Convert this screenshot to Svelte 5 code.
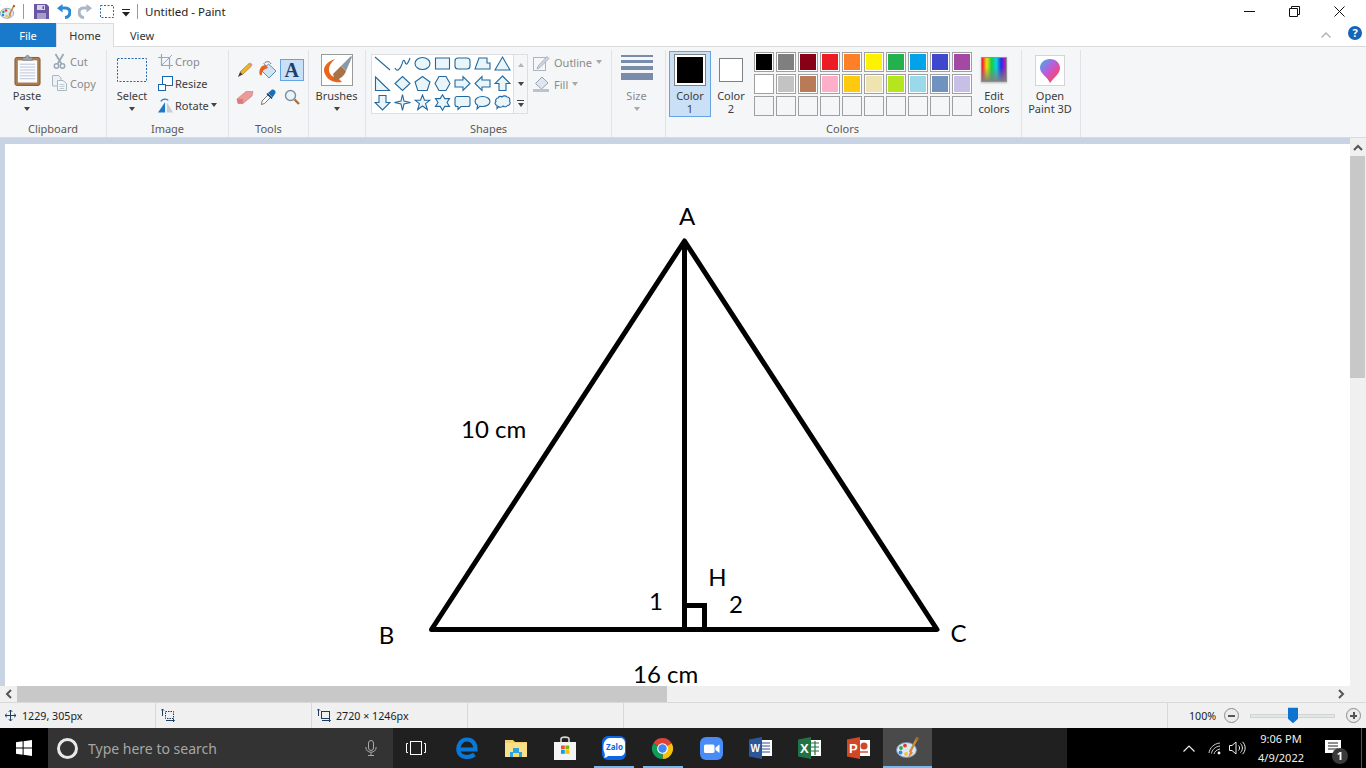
<script>
  const swatches = ['#000000','#7f7f7f','#880015','#ed1c24','#ff7f27','#fff200','#22b14c','#00a2e8','#3f48cc','#a349a4','#ffffff','#c3c3c3','#b97a57','#ffaec9','#ffc90e','#efe4b0','#b5e61d','#99d9ea','#7092be','#c8bfe7',null,null,null,null,null,null,null,null,null,null];
  const shapes = [
    'M1 2L16 15','M1 13C3 17 6 15 8 9C9 5 10 4 11 7C12 11 14 9 16 3','M1 8.5a7.5 6 0 1 0 15 0a7.5 6 0 1 0-15 0Z','M1.5 3h14v11h-14Z','M4 3h9a3 3 0 0 1 3 3v5a3 3 0 0 1-3 3h-9a3 3 0 0 1-3-3v-5a3 3 0 0 1 3-3Z','M1 14L5 3h8v5h3v6Z','M8.5 2L16 15H1Z',
    'M1.5 2L15.5 15.5H1.5Z','M8.5 1.5L16 8.5L8.5 15.5L1 8.5Z','M8.5 1.5L16 7L13.2 15.5H3.8L1 7Z','M5 1.5H12L16 8.5L12 15.5H5L1 8.5Z','M1 5H9V1.5L16 8.5L9 15.5V12H1Z','M16 5H8V1.5L1 8.5L8 15.5V12H16Z','M8.5 1L16 8.5H12V15.5H5V8.5H1Z',
    'M5 1.5H12V8.5H16L8.5 16L1 8.5H5Z','M8.5 .5L10 7L16.5 8.5L10 10L8.5 16.5L7 10L.5 8.5L7 7Z','M8.5 1L10.5 6.2H16L11.6 9.6L13.3 15.5L8.5 12L3.7 15.5L5.4 9.6L1 6.2H6.5Z','M8.5 .8L10.8 4.6H15.5L13 8.5L15.5 12.4H10.8L8.5 16.2L6.2 12.4H1.5L4 8.5L1.5 4.6H6.2Z','M3 2.5H14a2 2 0 0 1 2 2v6a2 2 0 0 1-2 2H7L4 15.5V12.5H3a2 2 0 0 1-2-2v-6a2 2 0 0 1 2-2Z','M8.5 2.5C13 2.5 16 4.8 16 7.5S13 12.5 8.5 12.5C7.5 12.5 6.8 12.4 6 12.2L3 15L3.6 11.2C2 10.2 1 9 1 7.5C1 4.8 4 2.5 8.5 2.5Z','M4 4C5 2 7 2 8 3C9 1.5 12 1.5 13 3C15 3 16.5 5 15.5 7C17 9 15.5 11.5 13.5 11.5C12.5 13 10 13 9 12C8 13.5 5.5 13.5 4.5 12.5L3 14.5V11.5C1 11 .5 8.5 2 7.5C1 6 2.5 4 4 4Z'
  ];
  const taskItems = ['edge','folder','store','zalo','chrome','zoom','word','excel','ppt','paint'];
</script>

{#snippet palette(size)}
  <svg width={size} height={size} viewBox="0 0 24 24" class="block">
    <ellipse cx="10.5" cy="14" rx="10" ry="7.5" fill="#dbe8f3" stroke="#6d8fae" />
    <circle cx="5" cy="12" r="1.9" fill="#3fa34d" />
    <circle cx="9" cy="9.6" r="1.9" fill="#e53935" />
    <circle cx="4.5" cy="16.5" r="1.9" fill="#2e86de" />
    <circle cx="10" cy="18" r="1.9" fill="#f4c430" />
    <path d="M21.5 1.5L14 16" stroke="#c98a3c" stroke-width="2.4" />
    <path d="M14.5 14L12 22L17 17Z" fill="#e8872c" />
    <path d="M20 1L23 2.5L21.8 5L19 3.6Z" fill="#a3672e" />
  </svg>
{/snippet}

{#snippet caret(kind)}
  <span class="caret {kind}"></span>
{/snippet}

<div class="window">
  <header class="titlebar">
    <span class="app-icon">{@render palette(16)}</span>
    <span class="qa-sep first"></span>
    <svg class="qa save" width="15" height="15" viewBox="0 0 15 15"><path d="M0 0H12.5L15 2.5V15H0Z" fill="#6a56a5" /><path d="M3 1H11V6H3Z" fill="#d6d0e6" /><path d="M3 9H12V15H3Z" fill="#a79cc8" /><path d="M8.5 2H10V5H8.5Z" fill="#6a56a5" /></svg>
    <svg class="qa undo" width="14" height="15" viewBox="0 0 14 15"><path d="M2 4H8.5C15 4 14 13 8 13.5" fill="none" stroke="#2b8ad6" stroke-width="3.2" /><path d="M5.5 0V8.5L0 4.2Z" fill="#2b8ad6" /></svg>
    <svg class="qa redo" width="14" height="15" viewBox="0 0 14 15"><path d="M12 4H5.5C-1 4 0 13 6 13.5" fill="none" stroke="#a9b7c6" stroke-width="3.2" /><path d="M8.5 0V8.5L14 4.2Z" fill="#a9b7c6" /></svg>
    <svg class="qa sel" width="14" height="13" viewBox="0 0 14 13"><rect x=".5" y=".5" width="13" height="12" fill="none" stroke="#2367ad" stroke-dasharray="2 1.5" /></svg>
    <svg class="qa more" width="8" height="8" viewBox="0 0 8 8"><path d="M0 0H8V1H0Z M0 3H8L4 7.5Z" fill="#222" /></svg>
    <span class="qa-sep second"></span>
    <span class="title">Untitled - Paint</span>
    <div class="winbtns">
      <span class="winbtn"><svg width="11" height="11" viewBox="0 0 11 11"><path d="M0 5.5H11" stroke="#111" /></svg></span>
      <span class="winbtn"><svg width="11" height="11" viewBox="0 0 11 11"><path d="M.5 2.5H8.5V10.5H.5Z M2.5 2.5V.5H10.5V8.5H8.5" fill="none" stroke="#111" /></svg></span>
      <span class="winbtn"><svg width="11" height="11" viewBox="0 0 11 11"><path d="M.5 .5L10.5 10.5M10.5 .5L.5 10.5" stroke="#111" /></svg></span>
    </div>
  </header>

  <nav class="tabs">
    <span class="tab file">File</span>
    <span class="tab home">Home</span>
    <span class="tab view">View</span>
    <svg class="collapse" width="10" height="6" viewBox="0 0 10 6"><path d="M.5 5.5L5 1L9.5 5.5" fill="none" stroke="#aab0b8" stroke-width="1.3" /></svg>
    <span class="help">?</span>
  </nav>

  <section class="ribbon">
    <div class="group g-clip">
      <div class="content">
        <div class="big paste">
          <span class="big-icon">
            <svg width="27" height="32" viewBox="0 0 28 32"><rect x="1" y="3" width="26" height="29" rx="2" fill="#a97c50" stroke="#80592f" /><rect x="4" y="6" width="20" height="23" fill="#fafbfd" /><path d="M6 10H22M6 13H22M6 16H22M6 19H22M6 22H22M6 25H22" stroke="#b9c6d8" /><path d="M9 6V3H12C12 0 16 0 16 3H19V6Z" fill="#9da3aa" stroke="#6f757b" stroke-width=".6" /></svg>
          </span>
          <span class="big-label">Paste</span>
          {@render caret('dark')}
        </div>
        <div class="smalls">
          <div class="small off">
            <svg width="15" height="16" viewBox="0 0 14 16"><path d="M3 1L9 11M11 1L5 11" stroke="#9aa8b8" stroke-width="1.8" /><circle cx="4" cy="13" r="2.2" fill="none" stroke="#9aa8b8" stroke-width="1.5" /><circle cx="10" cy="13" r="2.2" fill="none" stroke="#9aa8b8" stroke-width="1.5" /></svg>
            <span>Cut</span>
          </div>
          <div class="small off">
            <svg width="15" height="16" viewBox="0 0 15 16"><path d="M.5 .5H6.5L9 3V11H.5Z" fill="#eef2f6" stroke="#a9b6c4" /><path d="M5.5 5.5H11L14.5 8.5V15.5H5.5Z" fill="#f6f8fa" stroke="#a9b6c4" /><path d="M7.5 9.5H12.5M7.5 11.5H12.5M7.5 13.5H12.5" stroke="#c1cbd6" /></svg>
            <span>Copy</span>
          </div>
        </div>
      </div>
      <div class="glabel">Clipboard</div>
    </div>

    <div class="group g-image">
      <div class="content">
        <div class="big select">
          <span class="big-icon">
            <svg width="30" height="24" viewBox="0 0 30 24"><rect x=".5" y=".5" width="29" height="23" fill="none" stroke="#2367ad" stroke-dasharray="2 1.5" /></svg>
          </span>
          <span class="big-label">Select</span>
          {@render caret('dark')}
        </div>
        <div class="smalls">
          <div class="small off">
            <svg width="15" height="15" viewBox="0 0 15 15"><path d="M3.5 0V11.5H15M0 3.5H11.5V15" fill="none" stroke="#96a6c0" stroke-width="1.2" /><path d="M3.5 11.5L14 1" stroke="#96a6c0" /></svg>
            <span>Crop</span>
          </div>
          <div class="small">
            <svg width="15" height="15" viewBox="0 0 15 15"><rect x="4.5" y=".5" width="10" height="9" fill="#fff" stroke="#1a66ad" /><rect x=".5" y="8.5" width="7" height="6" fill="#fff" stroke="#1a66ad" /></svg>
            <span>Resize</span>
          </div>
          <div class="small">
            <svg width="15" height="15" viewBox="0 0 16 15"><path d="M7.5 4V15H0Z" fill="#1f78c8" /><path d="M9.5 4V15H16Z" fill="#c9ccd0" /><path d="M3 3C5 0 9 0 11 2" fill="none" stroke="#1f78c8" stroke-width="1.4" /></svg>
            <span>Rotate</span>
            {@render caret('dark inline')}
          </div>
        </div>
      </div>
      <div class="glabel">Image</div>
    </div>

    <div class="group g-tools">
      <div class="content tools-grid">
        <span class="tool"><svg width="16" height="16" viewBox="0 0 16 16"><path d="M3 10L12 1.5L14.5 4L5.5 12.5Z" fill="#f0b429" stroke="#8d6a1a" stroke-width=".6" /><path d="M12 1.5L13.5 .5L15.5 2.5L14.5 4Z" fill="#e58f8f" /><path d="M3 10L1 15L5.5 12.5Z" fill="#3a3a3a" /></svg></span>
        <span class="tool"><svg width="18" height="19" viewBox="0 0 18 19"><path d="M9.5 3L17 10L10 17L3 10Z" fill="#cfe4f5" stroke="#5a8fbe" /><path d="M7 5L5 2.5C7 0 11 0 12 3" fill="none" stroke="#6b7c8c" /><path d="M7 4C2 4 0 8 .5 13C1 15 3 15 3 12.5C3 10 5 8 9 7Z" fill="#e4641f" /></svg></span>
        <span class="tool active"><span class="tool-a">A</span></span>
        <span class="tool"><svg width="18" height="15" viewBox="0 0 18 15"><path d="M1 9L10 1.5H17L16 6L7 13.5H2Z" fill="#ec9b9b" stroke="#c77474" stroke-width=".6" /><path d="M1 9H7L7 13.5H2Z" fill="#dc7b7b" /></svg></span>
        <span class="tool"><svg width="16" height="17" viewBox="0 0 16 17"><path d="M1.5 15.5L2 12L8 6L10.5 8.5L4.5 14.5Z" fill="#fff" stroke="#555" stroke-width=".8" /><path d="M8 4L12 .5C14 0 16 2 15.5 4L12.5 8.5Z" fill="#1c6eb4" /><path d="M7 4.5L12 9.5" stroke="#123f66" stroke-width="1.6" /></svg></span>
        <span class="tool"><svg width="16" height="16" viewBox="0 0 16 16"><circle cx="6.5" cy="6.5" r="5" fill="#eaf3fa" stroke="#7e8d9c" stroke-width="1.4" /><path d="M10.5 10.5L15 15" stroke="#a7743f" stroke-width="2.4" /></svg></span>
      </div>
      <div class="glabel">Tools</div>
    </div>

    <div class="group g-brush">
      <div class="content">
        <div class="big brush">
          <span class="big-icon">
            <svg width="32" height="32" viewBox="0 0 32 32"><rect x=".5" y=".5" width="31" height="31" fill="#fff" stroke="#9a9a9a" /><path d="M14 5C5 8 1 14 4 20C7 27 14 29 21 28L17 24C12 24 8 20 8 16C8 11 11 8 14 5Z" fill="#e9651c" /><path d="M12 20L20 12L25 17C23 23 17 27 10 26C13 25 13 22 12 20Z" fill="#a97146" /><path d="M20 12L30 2L31 3L25 17Z" fill="#8b98a8" /></svg>
          </span>
          <span class="big-label">Brushes</span>
          {@render caret('dark')}
        </div>
      </div>
      <div class="glabel"></div>
    </div>

    <div class="group g-shapes">
      <div class="content shapes-row">
        <div class="gallery">
          <div class="shape-grid">
            {#each shapes as d}
              <span class="shape"><svg width="17" height="17" viewBox="0 0 17 17"><path {d} fill={d === shapes[0] || d === shapes[1] ? 'none' : '#eaf5fa'} stroke="#21699f" stroke-width="1.1" /></svg></span>
            {/each}
          </div>
          <div class="scroller">
            <span class="sc"><span class="tri up"></span></span>
            <span class="sc"><span class="tri down"></span></span>
            <span class="sc"><span class="bar"></span><span class="tri down"></span></span>
          </div>
        </div>
        <div class="smalls narrow">
          <div class="small off">
            <svg width="17" height="17" viewBox="0 0 17 17"><rect x=".5" y="3.5" width="12" height="13" fill="#f4f6f8" stroke="#a9b6c4" /><path d="M5 12L14 2.5L16 4.5L7 13.5L4 15Z" fill="#cdd5de" stroke="#95a3b2" stroke-width=".7" /></svg>
            <span>Outline</span>{@render caret('light inline')}
          </div>
          <div class="small off">
            <svg width="17" height="17" viewBox="0 0 17 17"><path d="M9 1L15 7L8.5 13L2.5 7.5Z" fill="#dfe6ee" stroke="#95a3b2" /><path d="M0 13H16V16H0Z" fill="#b9c4d0" /></svg>
            <span>Fill</span>{@render caret('light inline')}
          </div>
        </div>
      </div>
      <div class="glabel">Shapes</div>
    </div>

    <div class="group g-size">
      <div class="content">
        <div class="big size">
          <span class="big-icon size-lines"><i class="l1"></i><i class="l2"></i><i class="l3"></i><i class="l4"></i></span>
          <span class="big-label off">Size</span>
          {@render caret('light')}
        </div>
      </div>
      <div class="glabel"></div>
    </div>

    <div class="group g-colors">
      <div class="content colors-row">
        <div class="color-btn active">
          <span class="swatch-big"><span></span></span>
          <span class="two">Color<br />1</span>
        </div>
        <div class="color-btn second">
          <span class="swatch-2"></span>
          <span class="two">Color<br />2</span>
        </div>
        <div class="swatches">
          {#each swatches as c}
            <span class="cell" class:empty={!c}><span style:background={c}></span></span>
          {/each}
        </div>
        <div class="big edit">
          <span class="rainbow"></span>
          <span class="two">Edit<br />colors</span>
        </div>
      </div>
      <div class="glabel">Colors</div>
    </div>

    <div class="group g-3d">
      <div class="content">
        <div class="big p3d">
          <span class="box3d">
            <svg width="22" height="26" viewBox="0 0 22 26">
              <defs><linearGradient id="drop" x1="0" y1="0" x2="1" y2="1"><stop offset="0" stop-color="#33b5f0" /><stop offset=".45" stop-color="#c05ad8" /><stop offset=".75" stop-color="#f0487a" /><stop offset="1" stop-color="#f59a2c" /></linearGradient></defs>
              <path d="M11 1C17 1 21 5 21 10C21 16 15 19 11 25C9 19 1 16 1 10C1 5 5 1 11 1Z" fill="url(#drop)" />
            </svg>
          </span>
          <span class="two">Open<br />Paint 3D</span>
        </div>
      </div>
      <div class="glabel"></div>
    </div>
  </section>

  <main class="workspace">
    <div class="viewport">
      <svg class="canvas" width="1345" height="542" viewBox="5 144 1345 542">
        <g fill="none" stroke="#000" stroke-width="5">
          <path d="M431.5 629.5L684.5 241L937 629.5Z" stroke-linejoin="round" />
          <path d="M684.5 241V630" />
          <path d="M686 605.5H704.5V630" />
        </g>
        <g class="math">
          <text x="687" y="225" text-anchor="middle">A</text>
          <text x="461" y="438">10 cm</text>
          <text x="717.5" y="586" text-anchor="middle">H</text>
          <text x="656" y="610" text-anchor="middle">1</text>
          <text x="736" y="613" text-anchor="middle">2</text>
          <text x="386.5" y="644" text-anchor="middle">B</text>
          <text x="958.5" y="642" text-anchor="middle">C</text>
          <text x="633" y="683">16 cm</text>
        </g>
      </svg>
    </div>
    <div class="vscroll">
      <span class="vbtn"><svg width="10" height="7" viewBox="0 0 10 7"><path d="M1 6L5 2L9 6" fill="none" stroke="#555" stroke-width="2" /></svg></span>
      <span class="vthumb"></span>
    </div>
  </main>

  <div class="hscroll">
    <span class="hbtn"><svg width="7" height="10" viewBox="0 0 7 10"><path d="M6 1L2 5L6 9" fill="none" stroke="#555" stroke-width="2" /></svg></span>
    <span class="hthumb"></span>
    <span class="hbtn right"><svg width="7" height="10" viewBox="0 0 7 10"><path d="M1 1L5 5L1 9" fill="none" stroke="#555" stroke-width="2" /></svg></span>
  </div>

  <footer class="status">
    <div class="st s1">
      <svg width="11" height="11" viewBox="0 0 11 11"><path d="M5.5 0V11M0 5.5H11M3.8 1.8L5.5 0L7.2 1.8M3.8 9.2L5.5 11L7.2 9.2M1.8 3.8L0 5.5L1.8 7.2M9.2 3.8L11 5.5L9.2 7.2" fill="none" stroke="#1c3d63" /></svg>
      <span>1229, 305px</span>
    </div>
    <div class="st s2">
      <svg width="14" height="13" viewBox="0 0 14 13"><rect x="4.5" y="2.5" width="8" height="7" fill="none" stroke="#1c3d63" stroke-dasharray="1.5 1" /><path d="M1.5 0V7M0 1.5L1.5 0L3 1.5M5 11.5H13M12 10L13.5 11.5L12 13" fill="none" stroke="#1c3d63" /></svg>
    </div>
    <div class="st s3">
      <svg width="14" height="13" viewBox="0 0 14 13"><rect x="4.5" y="2.5" width="8" height="7" fill="none" stroke="#1c3d63" /><path d="M1.5 0V7M0 1.5L1.5 0L3 1.5M5 11.5H13M12 10L13.5 11.5L12 13" fill="none" stroke="#1c3d63" /></svg>
      <span>2720 × 1246px</span>
    </div>
    <div class="st s4"></div>
    <div class="st s5"></div>
    <div class="zoombar">
      <span class="pct">100%</span>
      <span class="zbtn"><i></i></span>
      <span class="slider"><svg class="thumb" width="10" height="17" viewBox="0 0 11 17"><path d="M0 0H11V12L5.5 17L0 12Z" fill="#0d73d1" /></svg></span>
      <span class="zbtn plus"><i></i><b></b></span>
    </div>
  </footer>

  <div class="taskbar">
    <div class="start"><svg width="16" height="16" viewBox="0 0 16 16"><path d="M0 2.3L6.6 1.3V7.5H0Z M7.6 1.2L16 0V7.5H7.6Z M0 8.5H6.6V14.7L0 13.7Z M7.6 8.5H16V16L7.6 14.8Z" fill="#fff" /></svg></div>
    <div class="search">
      <span class="ring"></span>
      <span class="placeholder">Type here to search</span>
      <svg class="mic" width="12" height="16" viewBox="0 0 12 16"><rect x="3.5" y=".5" width="5" height="10" rx="2.5" fill="none" stroke="#a8a8a8" /><path d="M.8 7C.8 14 11.2 14 11.2 7M6 12.5V15.5M3 15.5H9" fill="none" stroke="#a8a8a8" /></svg>
    </div>
    <div class="tv"><svg width="20" height="14" viewBox="0 0 20 14"><rect x="4.5" y=".5" width="11" height="13" fill="none" stroke="#fff" /><path d="M2 2.5H.5V11.5H2M18 2.5H19.5V11.5H18" fill="none" stroke="#fff" /></svg></div>
    {#each taskItems as item}
      <div class="ti {item}">
        {#if item === 'edge'}
          <svg width="22" height="22" viewBox="0 0 22 22"><path d="M3 12.5H19.5C19.5 6 16 2.5 11 2.5C5 2.5 2.3 8 2.3 12C2.3 17 6 20 11 20C14 20 16.5 19 18.5 17.5" fill="none" stroke="#0a78d7" stroke-width="4.2" /></svg>
        {:else if item === 'folder'}
          <svg width="22" height="20" viewBox="0 0 22 20"><path d="M0 2H8L10 4H22V19H0Z" fill="#f3d26c" /><path d="M0 5H22V19H0Z" fill="#fbe08a" /><path d="M5 14H8V10H14V14H17V19H5Z" fill="#2ea4de" /><path d="M8 15H14V19H8Z" fill="#ffd76a" /></svg>
        {:else if item === 'store'}
          <svg width="24" height="24" viewBox="0 0 24 24"><path d="M8 7V3C8 0.5 16 .5 16 3V7" fill="none" stroke="#d5d5d5" stroke-width="1.6" /><path d="M1 6H23V24H1Z" fill="#f4f4f4" /><rect x="8" y="9.5" width="3.8" height="3.8" fill="#f25022" /><rect x="12.4" y="9.5" width="3.8" height="3.8" fill="#7fba00" /><rect x="8" y="14" width="3.8" height="3.8" fill="#00a4ef" /><rect x="12.4" y="14" width="3.8" height="3.8" fill="#ffb900" /></svg>
        {:else if item === 'zalo'}
          <svg width="24" height="24" viewBox="0 0 24 24"><rect width="24" height="24" rx="6" fill="#0a68e8" /><path d="M8 2H18C21 2 23 4 23 7V15C23 18 21 20 18 20H6C5 21 4 21.5 2 22C3 20 3 19 2.5 17C1 14 1 7 3 5C4 3 6 2 8 2Z" fill="#fff" /><text x="12.5" y="14" class="zalo-t" text-anchor="middle">Zalo</text></svg>
        {:else if item === 'chrome'}
          <svg width="23" height="23" viewBox="0 0 24 24"><path d="M12 12L2.47 6.5A11 11 0 0 1 21.53 6.5Z" fill="#db4437" /><path d="M12 12L21.53 6.5A11 11 0 0 1 12 23Z" fill="#f4c20d" /><path d="M12 12L12 23A11 11 0 0 1 2.47 6.5Z" fill="#0f9d58" /><circle cx="12" cy="12" r="5.6" fill="#fff" /><circle cx="12" cy="12" r="4.4" fill="#4285f4" /></svg>
        {:else if item === 'zoom'}
          <svg width="23" height="23" viewBox="0 0 23 23"><rect width="23" height="23" rx="6" fill="#4a8cf7" /><rect x="4" y="7.5" width="10.5" height="8.5" rx="1.6" fill="#fff" /><path d="M15.5 10.5L19.5 7.5V16L15.5 13Z" fill="#fff" /></svg>
        {:else if item === 'word'}
          <svg width="23" height="22" viewBox="0 0 23 22"><path d="M11 3H23V19H11Z" fill="#fff" /><path d="M13 6H21M13 9H21M13 12H21M13 15H21" stroke="#2b579a" stroke-width="1.2" /><path d="M0 2.5L13 0V22L0 19.5Z" fill="#2b579a" /><text x="6.3" y="15" class="office-t" text-anchor="middle">W</text></svg>
        {:else if item === 'excel'}
          <svg width="23" height="22" viewBox="0 0 23 22"><path d="M11 3H23V19H11Z" fill="#fff" /><path d="M13 6H21M13 10H21M13 14H21M17 4V18" stroke="#217346" stroke-width="1.2" /><path d="M0 2.5L13 0V22L0 19.5Z" fill="#217346" /><text x="6.3" y="15.5" class="office-t big-t" text-anchor="middle">X</text></svg>
        {:else if item === 'ppt'}
          <svg width="23" height="22" viewBox="0 0 23 22"><path d="M11 3H23V19H11Z" fill="#fff" /><circle cx="17" cy="9" r="3.5" fill="#d24726" /><path d="M13 15H21" stroke="#d24726" stroke-width="1.4" /><path d="M0 2.5L13 0V22L0 19.5Z" fill="#d24726" /><text x="6.3" y="15.5" class="office-t big-t" text-anchor="middle">P</text></svg>
        {:else}
          {@render palette(24)}
        {/if}
      </div>
    {/each}
    <div class="task-gap"></div>
    <div class="tray">
      <svg class="t-chev" width="12" height="7" viewBox="0 0 12 7"><path d="M.5 6.5L6 1L11.5 6.5" fill="none" stroke="#eee" stroke-width="1.2" /></svg>
      <svg class="t-wifi" width="14" height="13" viewBox="0 0 14 13"><path d="M1 11C1.5 6 6 1.5 12 1M3.5 11.5C4 8 7 4.5 12 4M6 12C6.5 10 8.5 7.5 12 7" fill="none" stroke="#cfcfcf" /><circle cx="11" cy="11" r="1.4" fill="#fff" /></svg>
      <svg class="t-vol" width="17" height="14" viewBox="0 0 17 14"><path d="M.5 4.5H3L7 1V13L3 9.5H.5Z" fill="none" stroke="#eee" /><path d="M9.5 4.5C11 6 11 8 9.5 9.5M11.5 2.5C14 5 14 9 11.5 11.5M13.5 .8C17 4 17 10 13.5 13.2" fill="none" stroke="#eee" /></svg>
      <div class="clock"><span>9:06 PM</span><span>4/9/2022</span></div>
      <span class="notif">
        <svg width="16" height="13" viewBox="0 0 16 13"><path d="M0 0H16V13H0Z" fill="#fff" /><path d="M3 3H13M3 6H13M3 9H13" stroke="#222" /></svg>
        <span class="badge">1</span>
      </span>
      <span class="show-desktop"></span>
    </div>
  </div>
</div>

<style>
  :global(body) { margin: 0; overflow: hidden; background: #fff; }
  .block { display: block; }
  .window {
    width: 1366px; height: 768px; display: flex; flex-direction: column; overflow: hidden;
    font-family: "Noto Sans", "Open Sans", sans-serif; font-size: 11px; color: #3c3c3c;
  }
  .titlebar { height: 23px; flex: none; display: flex; align-items: center; background: #fff; }
  .qa-sep { width: 1px; height: 15px; background: #9a9a9a; }
  .qa-sep.first { margin-left: 7px; }
  .qa-sep.second { margin-left: 7px; }
  .qa { flex: none; }
  .save { margin-left: 10px; }
  .undo { margin-left: 8px; }
  .redo { margin-left: 7px; }
  .sel { margin-left: 8px; }
  .more { margin-left: 8px; margin-top: 3px; }
  .title { margin-left: 7px; font-size: 11.5px; color: #222; }
  .winbtns { margin-left: auto; display: flex; padding-right: 4px; }
  .winbtn { width: 45px; height: 20px; display: flex; align-items: center; justify-content: center; }
  .winbtn svg { display: block; }

  .tabs { height: 24px; flex: none; display: flex; align-items: stretch; background: #fff; position: relative; box-shadow: inset 0 -1px 0 #dadbdc; }
  .tab { display: flex; align-items: center; justify-content: center; font-size: 11px; color: #333; box-sizing: border-box; }
  .tab.file { width: 56px; background: #1979ca; color: #fff; }
  .tab.home { width: 58px; background: #f5f6f7; border: 1px solid #dadbdc; border-bottom: 0; }
  .tab.view { width: 56px; }
  .collapse { margin: 9px 0 0 auto; }
  .help { width: 14px; height: 14px; margin: 3px 4px 0 17px; border-radius: 50%; background: #1564b8; color: #fff; font-size: 11px; font-weight: 700; line-height: 14px; text-align: center; }

  .ribbon { height: 91px; flex: none; display: flex; background: #f5f6f7; box-sizing: border-box; padding-top: 3px; border-bottom: 1px solid #dadbdc; }
  .group { box-sizing: border-box; height: 87px; border-right: 1px solid #e1e3e6; display: flex; flex-direction: column; flex: none; }
  .content { flex: 1; display: flex; min-height: 0; }
  .glabel { height: 14px; line-height: 14px; margin-bottom: 1px; text-align: center; color: #595959; font-size: 11px; }
  .g-colors .glabel { padding-right: 2px; }
  .g-clip { width: 107px; }
  .g-image { width: 122px; }
  .g-tools { width: 80px; }
  .g-brush { width: 57px; }
  .g-shapes { width: 246px; }
  .g-size { width: 54px; }
  .g-colors { width: 356px; }
  .g-3d { width: 59px; }

  .big { display: flex; flex-direction: column; align-items: center; padding-top: 4px; box-sizing: border-box; }
  .big-icon { height: 32px; display: flex; align-items: center; justify-content: center; }
  .big-icon svg { display: block; }
  .big-label { margin-top: 3px; line-height: 14px; white-space: nowrap; }
  .big-label.off { color: #8a8a8a; }
  .two { margin-top: 3px; line-height: 13px; text-align: center; white-space: nowrap; }
  .caret { display: block; width: 0; height: 0; margin-top: 4px; border: 3.5px solid transparent; border-bottom: 0; border-top: 4px solid #444; }
  :global(.caret.light) { border-top-color: #a8a8a8; }
  :global(.caret.inline) { display: inline-block; margin: 0; }
  .paste { width: 38px; margin-left: 8px; }
  .select { width: 50px; }
  .smalls { display: flex; flex-direction: column; }
  .g-clip .smalls { margin-left: 5px; }
  .small { height: 22px; display: flex; align-items: center; gap: 3px; padding-left: 1px; box-sizing: border-box; white-space: nowrap; }
  .small svg { flex: none; display: block; }
  .small.off { color: #8a8a8a; }
  .g-image .small { gap: 2px; }
  .narrow { margin-left: 4px; }
  .tools-grid { display: grid; grid-template-columns: repeat(3, 23.5px); grid-template-rows: 22px 22px; gap: 5px 0; padding: 9px 0 0 4px; }
  .tool { display: flex; align-items: center; justify-content: center; box-sizing: border-box; }
  .tool svg { display: block; }
  .tool.active { background: #c9e0f7; border: 1px solid #64a4e4; }
  .tool-a { font-family: "Liberation Serif", serif; font-size: 20px; font-weight: 700; color: #1f3f6b; line-height: 20px; }
  .brush { width: 55px; }
  .shapes-row { padding: 4px 0 0 5px; align-items: flex-start; }
  .gallery { width: 157px; height: 60px; box-sizing: border-box; display: flex; background: #fff; border: 1px solid #dcdee1; flex: none; }
  .shape-grid { width: 141px; margin-top: -1px; display: grid; grid-template-columns: repeat(7, 20px); grid-auto-rows: 19.5px; box-sizing: border-box; }
  .shape { display: flex; align-items: center; justify-content: center; }
  .shape svg { display: block; }
  .scroller { flex: 1; display: flex; flex-direction: column; border-left: 1px solid #dcdee1; background: #f5f6f7; }
  .sc { flex: 1; display: flex; flex-direction: column; align-items: center; justify-content: center; gap: 2px; }
  .tri { width: 0; height: 0; border: 3.5px solid transparent; }
  .tri.up { border-top: 0; border-bottom: 4px solid #b5b5b5; }
  .tri.down { border-bottom: 0; border-top: 4px solid #444; }
  .bar { width: 7px; height: 1px; background: #444; }
  .g-shapes .smalls { margin-top: -3px; }
  .g-shapes .small { gap: 4px; }
  .size { width: 49px; }
  .size-lines { width: 32px; flex-direction: column; align-items: stretch; justify-content: flex-start; gap: 3px; height: 32px; padding-top: 1px; box-sizing: border-box; }
  .size-lines i { display: block; background: #7a8cab; }
  .l1 { height: 2px; }
  .l2 { height: 3px; }
  .l3 { height: 4px; }
  .l4 { height: 7px; }
  .colors-row { padding-left: 3px; align-items: flex-start; }
  .color-btn { box-sizing: border-box; display: flex; flex-direction: column; align-items: center; flex: none; height: 66px; margin-top: 1px; }
  .color-btn.active { width: 42px; background: #c9e0f7; border: 1px solid #64a4e4; padding-top: 2px; }
  .swatch-big { box-sizing: border-box; width: 32px; height: 32px; border: 1px solid #808080; padding: 2px; background: #fff; display: block; }
  .swatch-big span { display: block; height: 100%; background: #000; }
  .color-btn.second { width: 40px; }
  .swatch-2 { box-sizing: border-box; width: 24px; height: 24px; border: 1px solid #808080; background: #fff; margin-top: 7px; display: block; }
  .color-btn.second .two { margin-top: 7px; }
  .swatches { display: grid; grid-template-columns: repeat(10, 20px); grid-auto-rows: 20px; gap: 2px; margin: 2px 0 0 3px; flex: none; }
  .cell { box-sizing: border-box; border: 1px solid #a0a0a0; background: #fff; padding: 1px; display: block; }
  .cell.empty { background: #f5f6f7; }
  .cell span { display: block; height: 100%; }
  .edit { width: 44px; flex: none; padding-top: 7px; }
  .rainbow {
    width: 26px; height: 25px; box-sizing: border-box; border: 1px solid #909090; display: block;
    background: linear-gradient(to bottom, rgba(255,255,255,0) 40%, rgba(128,128,128,.95) 100%), linear-gradient(to right, #f01030, #f0e010, #10d040, #10d0e0, #2030e0, #e010c0);
    box-shadow: 0 1px 2px rgba(0,0,0,.25);
  }
  .edit .two { margin-top: 7px; }
  .p3d { width: 56px; }
  .box3d { width: 30px; height: 31px; box-sizing: border-box; border: 1px solid #d5d5d5; background: #fff; display: flex; align-items: center; justify-content: center; margin-top: 1px; }
  .p3d .two { margin-top: 3px; }

  .workspace { height: 548px; flex: none; display: flex; }
  .viewport { flex: 1; min-width: 0; background: #c8d3e3; padding: 6px 0 0 5px; overflow: hidden; }
  .canvas { display: block; background: #fff; }
  .math text { font-family: Lato, "Noto Sans", sans-serif; font-size: 24px; fill: #000; }
  .vscroll { width: 16px; flex: none; background: #f0f0f0; display: flex; flex-direction: column; padding-top: 1px; box-sizing: border-box; }
  .vbtn { height: 17px; width: 15px; display: flex; align-items: center; justify-content: center; }
  .vthumb { height: 222px; width: 15px; background: #c8c8c8; display: block; }
  .hscroll { height: 16px; flex: none; display: flex; background: #f0f0f0; }
  .hbtn { width: 17px; flex: none; display: flex; align-items: center; justify-content: center; }
  .hbtn.right { margin-left: auto; margin-right: 16px; }
  .hthumb { width: 650px; flex: none; background: #c8c8c8; }
  .status { height: 26px; flex: none; display: flex; align-items: center; background: #f0f0f0; border-top: 1px solid #d9d9d9; box-sizing: border-box; color: #1c1c1c; font-size: 10.7px; }
  .st { width: 156px; height: 25px; box-sizing: border-box; border-right: 1px solid #d9d9d9; display: flex; align-items: center; flex: none; padding-left: 5px; gap: 6px; }
  .st svg { flex: none; display: block; }
  .s3 { gap: 5px; }
  .s5 { width: 544px; }
  .zoombar { flex: 1; display: flex; align-items: center; padding-left: 21px; }
  .pct { width: 28px; }
  .zbtn { width: 15px; height: 15px; border-radius: 50%; border: 1px solid #8c8c8c; background: #ececec; box-sizing: border-box; position: relative; margin-left: 7px; flex: none; }
  .zbtn i { position: absolute; left: 3px; top: 5.5px; width: 7px; height: 2px; background: #555; }
  .zbtn b { position: absolute; left: 5.5px; top: 3px; width: 2px; height: 7px; background: #555; }
  .slider { width: 85px; height: 4px; background: #e2e7e7; border: 1px solid #d0d4d4; box-sizing: border-box; position: relative; margin-left: 11px; flex: none; }
  .thumb { position: absolute; left: 37px; top: -8px; display: block; }
  .zbtn.plus { margin-left: 11px; }

  .taskbar { height: 40px; flex: none; display: flex; align-items: stretch; background: #202020; }
  .start { width: 48px; background: #000; display: flex; align-items: center; justify-content: center; flex: none; }
  .search { width: 345px; flex: none; background: #333; display: flex; align-items: center; padding-left: 9px; box-sizing: border-box; }
  .ring { width: 21px; height: 21px; box-sizing: border-box; border: 3px solid #e8e8e8; border-radius: 50%; flex: none; }
  .placeholder { margin-left: 10px; font-size: 14px; color: #a6a6a6; white-space: nowrap; }
  .mic { margin-left: auto; margin-right: 16px; }
  .tv, .ti { width: 49px; flex: none; display: flex; align-items: center; justify-content: center; position: relative; box-sizing: border-box; }
  .tv { padding-right: 3px; }
  .ti svg, .tv svg { display: block; }
  .zalo::after, .chrome::after, .paint::after { content: ""; position: absolute; left: 4.5px; right: 4.5px; bottom: 0; height: 2px; background: #76b9ed; }
  .paint { background: #4a4a4a; }
  .paint::after { left: 0; right: 0; }
  .zalo-t { font: 700 8px "Noto Sans", sans-serif; fill: #0a68e8; }
  .office-t { font: 700 10px "Liberation Sans", sans-serif; fill: #fff; }
  .big-t { font-size: 13px; }
  .task-gap { width: 135px; flex: none; }
  .tray { flex: 1; background: #000; position: relative; color: #fff; display: flex; align-items: center; }
  .t-chev { margin-left: 116px; }
  .t-wifi { margin-left: 13px; }
  .t-vol { margin-left: 7px; }
  .clock { display: flex; flex-direction: column; align-items: center; width: 70px; font-size: 11px; line-height: 19px; color: #f0f0f0; }
  .notif { position: absolute; left: 258px; top: 12px; width: 26px; height: 24px; }
  .notif svg { display: block; }
  .badge { position: absolute; left: 7px; top: 8px; width: 16px; height: 16px; border-radius: 50%; background: #3a3a3a; color: #fff; font-size: 11px; font-weight: 700; line-height: 16px; text-align: center; }
  .show-desktop { position: absolute; right: 4px; top: 0; bottom: 0; width: 1px; background: #555; }
</style>
